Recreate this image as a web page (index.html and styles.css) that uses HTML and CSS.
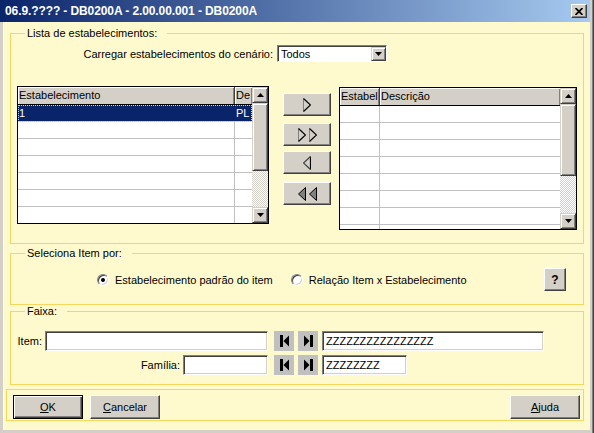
FILE: index.html
```html
<!DOCTYPE html>
<html lang="pt">
<head>
  <meta charset="UTF-8" />
  <title>DB0200A</title>
  <link rel="stylesheet" href="styles.css">
</head>
<body>
  <div class="window">
    <div class="titlebar">
      <span class="title">06.9.???? - DB0200A - 2.00.00.001 - DB0200A</span>
      <span class="close-btn">
        <svg width="8" height="7" viewBox="0 0 8 7"><path d="M0.5 0 L7.5 7 M7.5 0 L0.5 7" stroke="#000" stroke-width="1.7"/></svg>
      </span>
    </div>

    <div class="client">
      <fieldset class="group group-lista">
        <legend>Lista de estabelecimentos:</legend>
        <div class="cenario-row">
          <label class="cenario-label">Carregar estabelecimentos do cenário:</label>
          <div class="combo">
            <span class="combo-text">Todos</span>
            <span class="combo-btn">
              <svg width="7" height="4" viewBox="0 0 7 4"><polygon points="0,0 7,0 3.5,4" fill="#000"/></svg>
            </span>
          </div>
        </div>

        <div class="lists-row">
          <div class="grid grid-left">
            <div class="grid-body">
              <div class="grid-row grid-head"><div class="cell">Estabelecimento</div><div class="cell">De</div></div>
              <div class="grid-row selected"><div class="cell">1</div><div class="cell">PL</div></div>
              <div class="grid-row"><div class="cell"></div><div class="cell"></div></div>
              <div class="grid-row"><div class="cell"></div><div class="cell"></div></div>
              <div class="grid-row"><div class="cell"></div><div class="cell"></div></div>
              <div class="grid-row"><div class="cell"></div><div class="cell"></div></div>
              <div class="grid-row"><div class="cell"></div><div class="cell"></div></div>
              <div class="grid-row"><div class="cell"></div><div class="cell"></div></div>
            </div>
            <div class="scrollbar">
              <div class="sb-btn"><svg width="7" height="4" viewBox="0 0 7 4"><polygon points="0,4 3.5,0 7,4" fill="#000"/></svg></div>
              <div class="sb-thumb thumb-left"></div>
              <div class="sb-track"></div>
              <div class="sb-btn"><svg width="7" height="4" viewBox="0 0 7 4"><polygon points="0,0 7,0 3.5,4" fill="#000"/></svg></div>
            </div>
          </div>

          <div class="move-col">
            <div class="btn move-btn">
              <svg width="8" height="14" viewBox="0 0 8 14"><path d="M0.5 0.5 V13.5" stroke="#808080"/><path d="M0.5 0.5 L7.5 7 L0.5 13.5" stroke="#000" stroke-width="1.2" fill="none"/></svg>
            </div>
            <div class="btn move-btn">
              <svg width="8" height="14" viewBox="0 0 8 14"><path d="M0.5 0.5 V13.5" stroke="#808080"/><path d="M0.5 0.5 L7.5 7 L0.5 13.5" stroke="#000" stroke-width="1.2" fill="none"/></svg>
              <svg width="8" height="14" viewBox="0 0 8 14"><path d="M0.5 0.5 V13.5" stroke="#808080"/><path d="M0.5 0.5 L7.5 7 L0.5 13.5" stroke="#000" stroke-width="1.2" fill="none"/></svg>
            </div>
            <div class="btn move-btn move-back">
              <svg width="8" height="14" viewBox="0 0 8 14"><path d="M7.5 0.5 V13.5" stroke="#000" stroke-width="1.2"/><path d="M7.5 0.5 L0.5 7 L7.5 13.5" stroke="#404040" stroke-width="1.2" fill="none"/></svg>
            </div>
            <div class="btn move-btn move-all-back">
              <svg width="8" height="14" viewBox="0 0 8 14"><path d="M7.5 0.5 L0.5 7 L7.5 13.5 Z" stroke="#000" fill="#808080"/></svg>
              <svg width="8" height="14" viewBox="0 0 8 14"><path d="M7.5 0.5 L0.5 7 L7.5 13.5 Z" stroke="#000" fill="#808080"/></svg>
            </div>
          </div>

          <div class="grid grid-right">
            <div class="grid-body">
              <div class="grid-row grid-head"><div class="cell">Estabel</div><div class="cell">Descrição</div></div>
              <div class="grid-row"><div class="cell"></div><div class="cell"></div></div>
              <div class="grid-row"><div class="cell"></div><div class="cell"></div></div>
              <div class="grid-row"><div class="cell"></div><div class="cell"></div></div>
              <div class="grid-row"><div class="cell"></div><div class="cell"></div></div>
              <div class="grid-row"><div class="cell"></div><div class="cell"></div></div>
              <div class="grid-row"><div class="cell"></div><div class="cell"></div></div>
              <div class="grid-row"><div class="cell"></div><div class="cell"></div></div>
              <div class="grid-row"><div class="cell"></div><div class="cell"></div></div>
            </div>
            <div class="scrollbar">
              <div class="sb-btn"><svg width="7" height="4" viewBox="0 0 7 4"><polygon points="0,4 3.5,0 7,4" fill="#000"/></svg></div>
              <div class="sb-thumb thumb-right"></div>
              <div class="sb-track"></div>
              <div class="sb-btn"><svg width="7" height="4" viewBox="0 0 7 4"><polygon points="0,0 7,0 3.5,4" fill="#000"/></svg></div>
            </div>
          </div>
        </div>
      </fieldset>

      <fieldset class="group group-seleciona">
        <legend>Seleciona Item por:</legend>
        <div class="radio-row">
          <label class="radio radio-padrao">
            <span class="radio-dot"><span class="dot"></span></span>
            Estabelecimento padrão do item
          </label>
          <label class="radio radio-relacao">
            <span class="radio-dot"></span>
            Relação Item x Estabelecimento
          </label>
          <div class="btn help-btn">?</div>
        </div>
      </fieldset>

      <fieldset class="group group-faixa">
        <legend>Faixa:</legend>
        <div class="range-row range-item">
          <div class="range-left">
            <label>Item:</label>
            <div class="field field-item"></div>
          </div>
          <div class="nav-btn nav-first">
            <svg width="9" height="12" viewBox="0 0 9 12"><rect x="0" y="0" width="3" height="12" fill="#000"/><polygon points="3.5,6 9,0.5 9,11.5" fill="#000"/></svg>
          </div>
          <div class="nav-btn nav-last">
            <svg width="9" height="12" viewBox="0 0 9 12"><polygon points="0,0.5 5.5,6 0,11.5" fill="#000"/><rect x="6" y="0" width="3" height="12" fill="#000"/></svg>
          </div>
          <div class="field field-to field-item-to">ZZZZZZZZZZZZZZZZ</div>
        </div>
        <div class="range-row range-familia">
          <div class="range-left">
            <label>Família:</label>
            <div class="field field-small"></div>
          </div>
          <div class="nav-btn nav-first">
            <svg width="9" height="12" viewBox="0 0 9 12"><rect x="0" y="0" width="3" height="12" fill="#000"/><polygon points="3.5,6 9,0.5 9,11.5" fill="#000"/></svg>
          </div>
          <div class="nav-btn nav-last">
            <svg width="9" height="12" viewBox="0 0 9 12"><polygon points="0,0.5 5.5,6 0,11.5" fill="#000"/><rect x="6" y="0" width="3" height="12" fill="#000"/></svg>
          </div>
          <div class="field field-to field-small">ZZZZZZZZ</div>
        </div>
      </fieldset>

      <div class="footer">
        <div class="btn footer-btn default"><u>O</u>K</div>
        <div class="btn footer-btn cancel"><u>C</u>ancelar</div>
        <div class="btn footer-btn help"><u>A</u>juda</div>
      </div>
    </div>
  </div>
</body>
</html>
```

FILE: styles.css
```css
* {
  box-sizing: border-box;
}
body {
  margin: 0;
  font-family: "Liberation Sans", Arial, sans-serif;
  font-size: 11px;
  color: #000;
  background: #d4d0c8;
}
.window {
  width: 594px;
  height: 433px;
  display: flex;
  flex-direction: column;
  padding-right: 4px;
  background: linear-gradient(to left, #404040 1px, #808080 1px 2px, #d4d0c8 2px);
}

/* title bar */
.titlebar {
  height: 22px;
  display: flex;
  align-items: center;
  padding: 0 3px 0 5px;
  background: linear-gradient(to right, #0a246a, #a6caf0);
}
.title {
  flex: 1;
  color: #fff;
  font-weight: bold;
  font-size: 12px;
  letter-spacing: -0.1px;
  white-space: nowrap;
}
.close-btn {
  width: 16px;
  height: 14px;
  display: flex;
  align-items: center;
  justify-content: center;
  background: #d4d0c8;
  border: 1px solid;
  border-color: #fff #404040 #404040 #fff;
  box-shadow: inset -1px -1px #808080;
}

.client {
  flex: 1;
  display: flex;
  flex-direction: column;
  background: #fffacd;
  border-left: 3px solid #d4d0c8;
  border-bottom: 3px solid #d4d0c8;
  box-shadow: inset 1px 0 #fff;
}

/* group boxes */
.group {
  margin: 0 6px 0 7px;
  padding: 0 6px;
  border: 1px solid #f8d65e;
  min-width: 0;
}
.group legend {
  margin-left: 8px;
  padding: 0 10px 0 2px;
  line-height: 13px;
}
.group-lista {
  margin-top: 5px;
  padding-bottom: 13px;
}
.group-seleciona {
  margin-top: 3px;
  padding-bottom: 13px;
}
.group-faixa {
  padding-bottom: 9px;
}

/* shared 3d button */
.btn {
  display: flex;
  align-items: center;
  justify-content: center;
  background: #d4d0c8;
  border: 1px solid;
  border-color: #fff #404040 #404040 #fff;
  box-shadow: inset -1px -1px #808080;
}

.cenario-row {
  display: flex;
  align-items: center;
  gap: 4px;
  margin-top: 5px;
}
.cenario-label {
  width: 256px;
  text-align: right;
}
.combo {
  width: 110px;
  height: 17px;
  display: flex;
  align-items: center;
  background: #fff;
  border: 1px solid;
  border-color: #808080 #fff #fff #808080;
  box-shadow: inset 1px 1px #404040;
  padding: 1px 0 0 3px;
}
.combo-text {
  flex: 1;
}
.combo-btn {
  width: 15px;
  height: 14px;
  display: flex;
  align-items: center;
  justify-content: center;
  background: #d4d0c8;
  border: 1px solid;
  border-color: #d4d0c8 #404040 #404040 #d4d0c8;
  box-shadow: inset 1px 1px #fff, inset -1px -1px #808080;
}

/* lists */
.lists-row {
  display: flex;
  align-items: flex-start;
  margin-top: 24px;
}
.grid {
  display: flex;
  background: #fff;
  border: 1px solid #000;
}
.grid-left {
  width: 252px;
  height: 138px;
}
.grid-right {
  width: 238px;
  height: 143px;
  margin-top: 1px;
}
.grid-body {
  flex: 1;
  overflow: hidden;
}
.grid-row {
  display: grid;
  height: 17px;
  border-bottom: 1px solid #c0c0c0;
}
.grid-left .grid-row {
  grid-template-columns: 217px 1fr;
}
.grid-right .grid-row {
  grid-template-columns: 40px 1fr;
}
.cell {
  padding-left: 1px;
  line-height: 16px;
  overflow: hidden;
  white-space: nowrap;
}
.cell:first-child {
  border-right: 1px solid #c0c0c0;
}
.grid-row.grid-head {
  height: 18px;
  border-bottom: 1px solid #000;
  background: #d4d0c8;
}
.grid-head .cell {
  box-shadow: inset 1px 1px #fff, inset -1px 0 #808080;
}
.grid-head .cell:first-child {
  border-right: 1px solid #404040;
}
.grid-row.selected {
  position: relative;
  background: #0a246a;
  color: #fff;
}
.grid-row.selected::after {
  content: "";
  position: absolute;
  inset: 0 0 -1px 0;
  border: 1px dotted #e4dc9c;
}
.grid-row.selected .cell:first-child {
  border-right-color: #0a246a;
}

.scrollbar {
  width: 16px;
  display: flex;
  flex-direction: column;
}
.sb-btn {
  height: 16px;
  display: flex;
  align-items: center;
  justify-content: center;
  background: #d4d0c8;
  border: 1px solid;
  border-color: #d4d0c8 #404040 #404040 #d4d0c8;
  box-shadow: inset 1px 1px #fff, inset -1px -1px #808080;
}
.sb-thumb {
  background: #d4d0c8;
  border: 1px solid;
  border-color: #d4d0c8 #404040 #404040 #d4d0c8;
  box-shadow: inset 1px 1px #fff, inset -1px -1px #808080;
}
.thumb-left {
  height: 68px;
}
.thumb-right {
  height: 72px;
}
.sb-track {
  flex: 1;
  background: repeating-conic-gradient(#d4d0c8 0 25%, #fff 0 50%) 0 0 / 2px 2px;
}

.move-col {
  width: 48px;
  display: flex;
  flex-direction: column;
  gap: 7px;
  margin: 7px 8px 0 14px;
}
.move-btn {
  height: 23px;
  gap: 3px;
}
.move-back {
  margin-top: -2px;
}
.move-all-back {
  margin-top: 1px;
}

/* seleciona item */
.radio-row {
  display: flex;
  align-items: center;
  height: 23px;
  margin-top: 8px;
}
.radio {
  display: flex;
  align-items: center;
  gap: 6px;
}
.radio-padrao {
  margin-left: 80px;
}
.radio-relacao {
  margin-left: 18px;
}
.radio-dot {
  width: 12px;
  height: 12px;
  display: flex;
  align-items: center;
  justify-content: center;
  border-radius: 50%;
  background: #fff;
  border: 1px solid;
  border-color: #808080 #fff #fff #808080;
  box-shadow: inset 1px 1px #404040, inset -1px -1px #d4d0c8;
}
.dot {
  width: 4px;
  height: 4px;
  border-radius: 50%;
  background: #000;
}
.help-btn {
  width: 22px;
  height: 23px;
  margin-left: auto;
  margin-right: 11px;
  font-weight: bold;
  font-size: 12px;
}

/* faixa */
.range-row {
  display: flex;
  align-items: center;
  height: 20px;
}
.range-item {
  margin-top: 13px;
}
.range-familia {
  margin-top: 4px;
}
.range-left {
  width: 251px;
  display: flex;
  align-items: center;
  justify-content: flex-end;
  gap: 3px;
}
.field {
  height: 20px;
  padding: 2px 0 0 3px;
  background: #fff;
  border: 1px solid;
  border-color: #808080 #fff #fff #808080;
  box-shadow: inset 1px 1px #404040, inset -1px -1px #d4d0c8;
  line-height: 15px;
  white-space: nowrap;
  overflow: hidden;
}
.field-item {
  width: 223px;
}
.field-item-to {
  width: 222px;
}
.field-small {
  width: 85px;
}
.field-to {
  margin-left: 4px;
}
.nav-btn {
  width: 20px;
  height: 20px;
  display: flex;
  align-items: center;
  justify-content: center;
  background: #c0c0c0;
}
.nav-first {
  margin-left: 6px;
}
.nav-last {
  margin-left: 4px;
}

/* footer */
.footer {
  height: 32px;
  display: flex;
  margin: 4px 6px 0 3px;
  padding: 5px 3px 0 6px;
  border: 1px solid #f8d65e;
}
.footer-btn {
  width: 70px;
  height: 24px;
}
.cancel {
  margin-left: 7px;
}
.help {
  margin-left: auto;
}
.footer-btn.default {
  border: 1px solid #000;
  box-shadow: inset 1px 1px #fff, inset -1px -1px #404040, inset -2px -2px #808080;
}
```
